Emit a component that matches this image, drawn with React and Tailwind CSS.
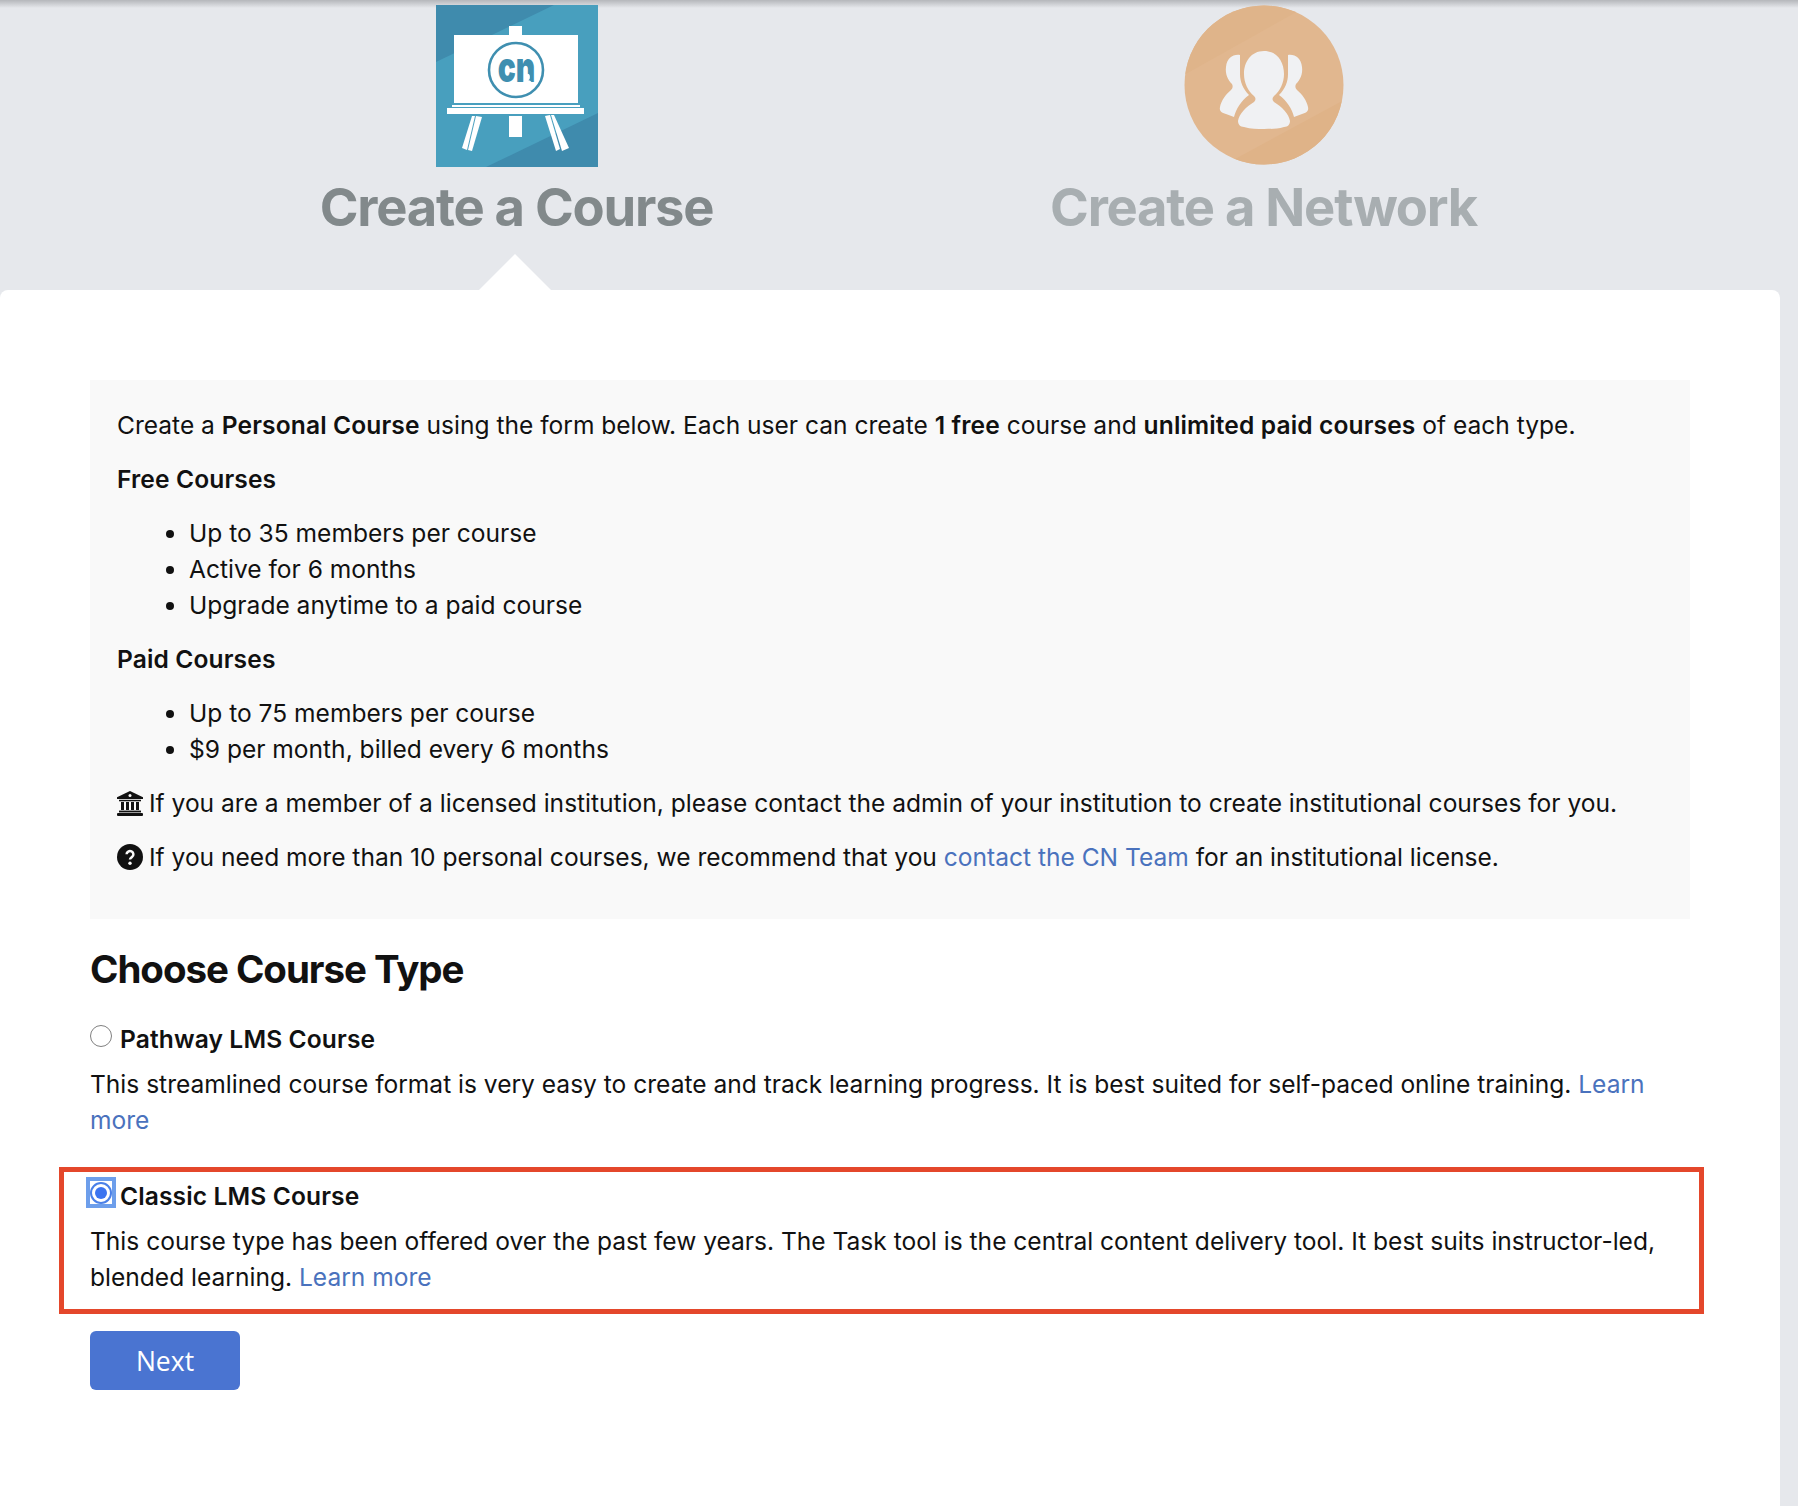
import React from "react";

function CourseLogo() {
  return (
    <svg width="162" height="162" viewBox="0 0 162 162" className="block">
      <rect width="162" height="162" fill="#489fbe" />
      <polygon points="0,0 118,0 0,57" fill="#3f8bad" />
      <polygon points="50,162 162,108 162,162" fill="#3f8bad" />
      <g fill="#fff">
        <rect x="73" y="21" width="13" height="9" />
        <rect x="18" y="30" width="124" height="68" />
        <rect x="16" y="100" width="128" height="2" />
        <rect x="11" y="103" width="137" height="6" />
        <rect x="73" y="111" width="13" height="21" />
        <polygon points="40,111 46,112 36,146 32,145" />
        <polygon points="36,111 39,111 31,145 26,143" />
        <polygon points="109,111 114,110 124,144 120,146" />
        <polygon points="115,110 118,110 133,143 126,146" />
      </g>
      <circle cx="80" cy="65" r="27" fill="#fff" stroke="#3f8fb0" strokeWidth="2.6" />
      <text transform="translate(80.5,77) scale(1,1.4)" textAnchor="middle" fontFamily="Inter, sans-serif" fontWeight="900" fontSize="30" fill="#3f8fb0">cn</text>
      <ellipse cx="91.5" cy="72" rx="2.4" ry="3.2" fill="#fff" />
      <path d="M87 78c.8-2 2.5-3 4.5-3s3.700 1 4.500 3z" fill="#fff" />
    </svg>
  );
}

function NetworkLogo() {
  return (
    <svg width="160" height="160" viewBox="0 0 160 160" className="block">
      <defs>
        <clipPath id="netclip"><circle cx="80" cy="80" r="79.5" /></clipPath>
      </defs>
      <g clipPath="url(#netclip)">
        <rect width="160" height="160" fill="#e1b78f" />
        <polygon points="0,70 125,0 0,0" fill="#dfb48a" />
        <polygon points="40,160 160,95 160,160" fill="#dfb388" />
      </g>
      <g fill="#f0f1f3">
        <path d="M56 50c-7-1-13 3-14 12-1 7 2 13 6 17 1 2 1 4-1 6-5 4-10 11-11 17-1 4 2 6 6 7l8 3c2-8 7-16 15-22-6-6-9-13-9-21 0-7 0-14 0-19z" />
        <path d="M104 50c7-1 13 3 14 12 1 7-2 13-6 17-1 2-1 4 1 6 5 4 10 11 11 17 1 4-2 6-6 7l-8 3c-2-8-7-16-15-22 6-6 9-13 9-21 0-7 0-14 0-19z" />
        <path d="M80 46c-13 0-20 11-20 23 0 9 4 17 10 22 2 2 2 4 0 6-8 5-15 12-16 19 0 3 2 6 6 6 7 2 13 2 20 2s13 0 20-2c4 0 6-3 6-6-1-7-8-14-16-19-2-2-2-4 0-6 6-5 10-13 10-22 0-12-7-23-20-23z" />
      </g>
    </svg>
  );
}

function BankIcon() {
  return (
    <svg width="26" height="25" viewBox="0 0 26 25" className="shrink-0">
      <path d="M13 0L26 6.2V8H0V6.2Z" fill="#111" />
      <circle cx="13" cy="4.6" r="1.5" fill="#f9f9f9" />
      <rect x="2" y="8.8" width="22" height="1.5" fill="#111" />
      <rect x="4" y="11" width="3" height="8" fill="#111" />
      <rect x="9" y="11" width="3" height="8" fill="#111" />
      <rect x="14" y="11" width="3" height="8" fill="#111" />
      <rect x="19" y="11" width="3" height="8" fill="#111" />
      <rect x="2" y="19.6" width="22" height="1.8" fill="#111" />
      <rect x="0" y="22" width="26" height="3" rx="1" fill="#111" />
    </svg>
  );
}

function QuestionIcon() {
  return (
    <svg width="26" height="26" viewBox="0 0 26 26" className="shrink-0">
      <circle cx="13" cy="13" r="13" fill="#111" />
      <path d="M9.6 10.3a3.4 3.2 0 1 1 5.4 2.6c-1.2.9-2 1.3-2 2.7" fill="none" stroke="#f9f9f9" strokeWidth="2.5" />
      <circle cx="13" cy="19.2" r="1.7" fill="#f9f9f9" />
    </svg>
  );
}

const A = ({ children }) => <a className="text-[#4a72bd]">{children}</a>;
const B = ({ children }) => <b className="font-semibold tracking-[0.13px]">{children}</b>;

export default function App() {
  return (
    <div className="relative h-[1506px] w-[1798px] overflow-hidden bg-[#e6e8ec] font-['Inter',sans-serif] text-[24.55px] leading-[36px] text-[#111]">
      <div className="absolute inset-x-0 top-0 h-2 bg-gradient-to-b from-[#b5b7bb] to-[#e6e8ec]" />
      <div className="relative ml-[143px] grid h-[290px] w-[1494px] grid-cols-2 pt-[5px]">
        <div className="flex flex-col items-center">
          <CourseLogo />
          <div className="mt-[8px] text-[52.5px] font-bold leading-[64px] tracking-[-1.25px] text-[#82898b]">Create a Course</div>
        </div>
        <div className="flex flex-col items-center">
          <NetworkLogo />
          <div className="mt-[10px] text-[52.5px] font-bold leading-[64px] tracking-[-1.25px] text-[#a8aeb1]">Create a Network</div>
        </div>
        <div className="absolute left-[336px] top-[254px] h-[36px] w-[72px] bg-white [clip-path:polygon(50%_0,100%_100%,0_100%)]" />
      </div>

      <div className="h-[1216px] w-[1780px] rounded-t-[8px] bg-white px-[90px] pt-[90px]">
        <div className="w-[1600px] bg-[#f9f9f9] px-[27px] pt-[27px] pb-[26px]">
          <p className="mb-[18px]">
            Create a <B>Personal Course</B> using the form below. Each user can create <B>1 free</B> course and <B>unlimited paid courses</B> of each type.
          </p>
          <p className="mb-[18px]"><B>Free Courses</B></p>
          <ul className="mb-[18px] list-disc pl-[72px]">
            <li>Up to 35 members per course</li>
            <li>Active for 6 months</li>
            <li>Upgrade anytime to a paid course</li>
          </ul>
          <p className="mb-[18px]"><B>Paid Courses</B></p>
          <ul className="mb-[18px] list-disc pl-[72px]">
            <li>Up to 75 members per course</li>
            <li>$9 per month, billed every 6 months</li>
          </ul>
          <p className="mb-[18px] flex items-center gap-[6px]">
            <BankIcon />
            <span>If you are a member of a licensed institution, please contact the admin of your institution to create institutional courses for you.</span>
          </p>
          <p className="mb-[18px] flex items-center gap-[6px]">
            <QuestionIcon />
            <span>If you need more than 10 personal courses, we recommend that you <A>contact the CN Team</A> for an institutional license.</span>
          </p>
        </div>

        <h2 className="mt-[27px] text-[38.5px] font-bold leading-[46px] tracking-[-1.05px] text-[#111]">Choose Course Type</h2>

        <div className="mt-[29px]">
          <div className="flex items-center gap-[8px]">
            <span className="mb-[7px] h-[22px] w-[22px] rounded-full border-[1.5px] border-[#808080] bg-white" />
            <B>Pathway LMS Course</B>
          </div>
          <p className="mt-[9px] w-[1600px]">
            This streamlined course format is very easy to create and track learning progress. It is best suited for self-paced online training. <A>Learn more</A>
          </p>
        </div>

        <div className="relative mt-[40px]">
          <div className="flex items-center gap-[8px]">
            <span className="relative mb-[7px] flex h-[22px] w-[22px] items-center justify-center rounded-full border-[2.5px] border-[#4a80e8] bg-white">
              <span className="h-[12px] w-[12px] rounded-full bg-[#3b74f0]" />
              <span className="pointer-events-none absolute left-[-6.5px] top-[-6.5px] h-[31px] w-[30px] border-[4px] border-[#6d9eeb]" />
            </span>
            <B>Classic LMS Course</B>
          </div>
          <p className="mt-[9px] w-[1600px]">
            This course type has been offered over the past few years. The Task tool is the central content delivery tool. It best suits instructor-led, blended learning. <A>Learn more</A>
          </p>
          <div className="pointer-events-none absolute left-[-31px] top-[-11px] h-[147px] w-[1645px] border-[5px] border-[#e4472b]" />
        </div>

        <button className="mt-[36px] block h-[59px] w-[150px] rounded-[6px] bg-[#4a74d1] font-['Open_Sans',sans-serif] text-[26.5px] font-medium text-white">Next</button>
      </div>
    </div>
  );
}
